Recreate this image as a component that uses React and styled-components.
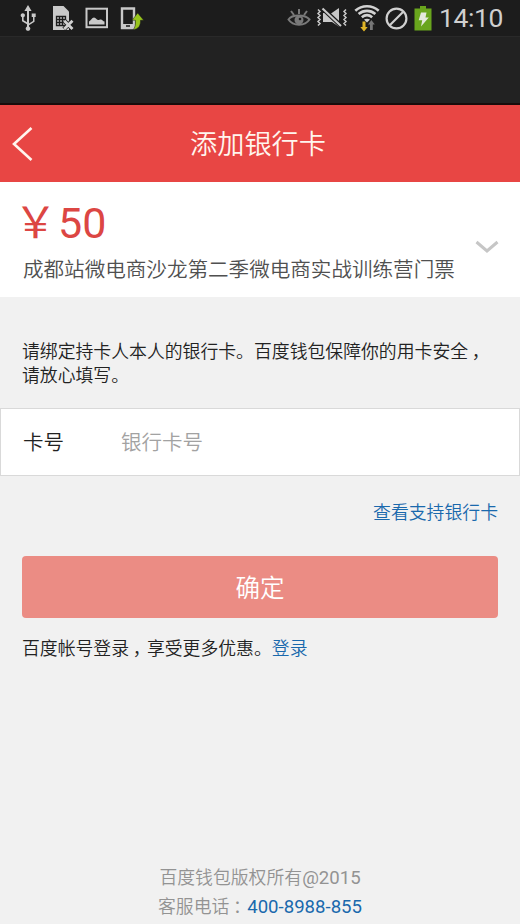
import React, { useState } from 'react';
import styled, { createGlobalStyle } from 'styled-components';

const GlobalStyle = createGlobalStyle`
  * {
    box-sizing: border-box;
  }

  body {
    margin: 0;
    background: #f1f1f1;
    font-family: Roboto, 'Noto Sans CJK SC', sans-serif;
    font-weight: 350;
  }
`;

const Screen = styled.div`
  display: flex;
  flex-direction: column;
  width: 520px;
  height: 924px;
  overflow: hidden;
  background: #f1f1f1;
`;

const StatusBar = styled.div`
  display: flex;
  align-items: center;
  justify-content: space-between;
  height: 37px;
  flex: none;
  padding: 0 17px 0 19px;
  background: #1c1c1c;
  border-bottom: 1px solid #292929;

  svg {
    display: block;
    flex: none;
  }
`;

const IconGroup = styled.div`
  display: flex;
  align-items: center;
  gap: ${props => props.$gap || '0'};

  .usb {
    margin-right: 4px;
  }
`;

const Clock = styled.span`
  width: 64px;
  margin-left: 2px;
  font-size: 26.5px;
  font-weight: 400;
  line-height: 36px;
  letter-spacing: -0.4px;
  color: #cfcfcf;
  white-space: nowrap;
`;

const TopBand = styled.div`
  height: 68px;
  flex: none;
  background: #222;
  border-bottom: 2px solid #190c0b;
`;

const Header = styled.header`
  display: grid;
  grid-template-columns: 46px 1fr 50px;
  align-items: center;
  height: 77px;
  flex: none;
  background: #e84644;
`;

const BackButton = styled.button`
  display: flex;
  padding: 0 0 0 10px;
  border: 0;
  background: none;
`;

const Title = styled.h1`
  margin: 0;
  padding-top: 3px;
  font-size: 27.2px;
  font-weight: 350;
  line-height: 40px;
  text-align: center;
  color: #fff5ee;
`;

const Order = styled.section`
  display: flex;
  align-items: center;
  justify-content: space-between;
  height: 115px;
  flex: none;
  padding: 14px 21px 0 23px;
  background: #fff;
`;

const Price = styled.div`
  display: flex;
  align-items: baseline;
  gap: 1px;
  height: 57px;
  font-size: 43px;
  font-weight: 400;
  line-height: 50px;
  color: #dc4643;
`;

// the full-width yen sign has wide side bearings
const Currency = styled.span`
  margin-left: -9px;
  font-family: 'Noto Sans CJK SC', sans-serif;
  line-height: 1;
`;

const OrderName = styled.div`
  height: 41px;
  font-size: 20.57px;
  line-height: 30px;
  color: #505050;
  white-space: nowrap;
`;

const Hint = styled.p`
  margin: 0;
  padding: 43px 20px 0 22px;
  height: 111px;
  flex: none;
  font-size: 17.85px;
  line-height: 23.5px;
  color: #222;
`;

// Full-width punctuation, trimmed to half a cell and centred in it again
const Mark = styled.span`
  font-family: 'Noto Sans CJK SC', sans-serif;
  font-feature-settings: 'halt';
  line-height: 1;
  padding: 0 0.3em 0 0.2em;
`;

const Field = styled.label`
  display: flex;
  align-items: center;
  height: 68px;
  flex: none;
  padding: 0 22px;
  border: 1px solid #d9d9d9;
  background: #fff;
  font-size: 20.5px;
  color: #222;
`;

const FieldName = styled.span`
  width: 98px;
  padding-top: 1px;
  line-height: 30px;
`;

const FieldInput = styled.input`
  flex: 1;
  min-width: 0;
  padding: 1px 0 0;
  border: 0;
  outline: 0;
  font: inherit;
  color: #222;

  &::placeholder {
    color: #a2a2a2;
    opacity: 1;
  }
`;

const Link = styled.a`
  color: #1a69ad;
  text-decoration: none;
`;

const BankLink = styled(Link)`
  align-self: flex-end;
  height: 80px;
  padding: 23px 22px 0 0;
  font-size: 17.85px;
  line-height: 28px;
`;

const Submit = styled.button`
  height: 62px;
  flex: none;
  margin: 0 22px;
  padding: 4px 0 0 0;
  border: 0;
  border-radius: 4px;
  background: #eb8c84;
  font: inherit;
  font-size: 24.5px;
  line-height: 58px;
  color: #fff;
`;

const LoginHint = styled.p`
  margin: 16px 22px 0;
  font-size: 17.85px;
  line-height: 30px;
  color: #222;
`;

const Footer = styled.footer`
  margin-top: auto;
  height: 62px;
  padding-top: 1px;
  font-size: 17.85px;
  line-height: 29px;
  text-align: center;
  color: #939393;
`;

const Latin = styled.span`
  font-size: 18.6px;
  font-weight: 400;
  line-height: 1;
`;

const UsbIcon = () => (
  <svg className="usb" width="18" height="26" viewBox="0 0 18 26" fill="#c9c9c9">
    <path d="M9 0l3.600 6H10v12.400l4-2.400v-4h-1.300V8.500h4V12h-1.200v4.800L10 20.200v1.300a2.300 2.300 0 1 1-2 0v-2.300l-5-3V12.300a2.100 2.100 0 1 1 1.600 0v3L8 17.200V6H5.400z" />
  </svg>
);

const SimIcon = () => (
  <svg width="22" height="26" viewBox="0 0 22 26">
    <path d="M1 1h10.500L17 6.500V25H1z" fill="#c9c9c9" />
    <path d="M4.500 11.500h9v9h-9zM7.500 11.500v9M10.500 11.500v9M4.500 14.500h9M4.500 17.500h9" fill="none" stroke="#1c1c1c" strokeWidth="1.300" />
    <path d="M12 15.500l8.500 8.500M20.500 15.500L12 24" stroke="#1c1c1c" strokeWidth="4.500" />
    <path d="M12.200 15.700l8.300 8.300M20.500 15.700L12.200 24" stroke="#d0d0d0" strokeWidth="2.800" />
  </svg>
);

const PictureIcon = () => (
  <svg width="24" height="22" viewBox="0 0 24 22">
    <rect x="1.500" y="1.700" width="20.500" height="18.500" fill="none" stroke="#c9c9c9" strokeWidth="2" />
    <path d="M4 17.500v-3c2-1 3-4 5-4s2.500 2.500 4 2.500 2-.8 3.200-.5 1.800 2 3.300 2v3z" fill="#c9c9c9" />
  </svg>
);

const PhoneIcon = () => (
  <svg width="24" height="25" viewBox="0 0 24 25">
    <path d="M2 2.500h12V22H2z" fill="none" stroke="#c9c9c9" strokeWidth="2.400" />
    <path d="M2 18h12v4.500H2z" fill="#c9c9c9" />
    <path d="M6 20h4" stroke="#333" strokeWidth="1.800" />
    <path d="M17.700 7l6 7.300h-3.200c.2 5-1.700 8.900-7.500 9.400 2.200-2 2.600-5 2.300-9.400H12z" fill="#98c51c" stroke="#1c1c1c" strokeWidth=".5" />
  </svg>
);

const EyeIcon = () => (
  <svg width="24" height="20" viewBox="0 0 24 20" fill="none" stroke="#797979">
    <path d="M1.500 11.500C5 6.200 18 6.200 22.500 11.500 18 18.500 6 18.500 1.500 11.500z" strokeWidth="2" />
    <path d="M12 1v5M4 3l3 4M20 3l-3 4" strokeWidth="2" />
    <circle cx="12" cy="12" r="3.500" fill="#797979" strokeWidth="2" />
    <circle cx="13" cy="11" r="1.300" fill="#1c1c1c" stroke="none" />
  </svg>
);

const MuteIcon = () => (
  <svg width="32" height="22" viewBox="0 0 32 22" fill="none" stroke="#c9c9c9">
    <path d="M2 2.500l2 2-2 2 2 2-2 2 2 2-2 2 2 2-2 2M30 2.500l-2 2 2 2-2 2 2 2-2 2 2 2-2 2 2 2" strokeWidth="1.500" />
    <path d="M7 6h3.500l13 12.500V20L16 15H7zM15 6.500L23 1v13z" fill="#c9c9c9" stroke="none" />
    <path d="M6.500 1.500L25 19" stroke="#1c1c1c" strokeWidth="4.200" />
    <path d="M6.500 1.500L25 19" strokeWidth="2.100" />
  </svg>
);

const WifiIcon = () => (
  <svg width="26" height="28" viewBox="0 0 26 28" fill="none">
    <path d="M1.300 6.700C8 .8 18 .8 24.700 6.700M4.600 10c5-4.200 11.800-4.200 16.800 0M7.800 13.200c3.200-2.600 7.200-2.600 10.400 0" stroke="#d2d2d2" strokeWidth="2.600" />
    <path d="M10 15.600c2-1.300 4-1.300 6 0L13 18.500z" fill="#d2d2d2" />
    <path d="M8.500 17.500h3v5.500h2.200l-3.700 4.500L6.300 23h2.200z" fill="#e0b526" />
    <path d="M16 26v-5.500h-2l3.400-4.500 3.400 4.500h-2V26z" fill="#777" />
  </svg>
);

const BlockIcon = () => (
  <svg width="23" height="23" viewBox="0 0 23 23" fill="none" stroke="#d0d0d0" strokeWidth="2.200">
    <circle cx="11.500" cy="11.500" r="9.900" />
    <path d="M5 18L18 5" />
  </svg>
);

const BatteryIcon = () => (
  <svg width="18" height="26" viewBox="0 0 18 26">
    <path d="M6 1h6v2.500h5.500V25.500H.5V3.500H6z" fill="#69a51d" />
    <path d="M7 7.500h5.500l-1 5h3.300L7 21.500l1.200-6.300H4.700z" fill="#e4e9dd" />
  </svg>
);

function App() {
  const [cardNumber, setCardNumber] = useState('');

  return (
    <>
      <GlobalStyle />
      <Screen>
        <StatusBar>
          <IconGroup $gap="11px">
            <UsbIcon />
            <SimIcon />
            <PictureIcon />
            <PhoneIcon />
          </IconGroup>
          <IconGroup $gap="5.400px">
            <EyeIcon />
            <MuteIcon />
            <WifiIcon />
            <BlockIcon />
            <BatteryIcon />
            <Clock>14:10</Clock>
          </IconGroup>
        </StatusBar>
        <TopBand />

        <Header>
          <BackButton aria-label="返回">
            <svg width="24" height="36" viewBox="0 0 24 36" fill="none" stroke="#fff5ee" strokeWidth="2.600">
              <path d="M21.500 2L4 18l17.500 16" />
            </svg>
          </BackButton>
          <Title>添加银行卡</Title>
        </Header>

        <Order>
          <div>
            <Price>
              <Currency>￥</Currency>
              <span>50</span>
            </Price>
            <OrderName>成都站微电商沙龙第二季微电商实战训练营门票</OrderName>
          </div>
          <svg width="24" height="14" viewBox="0 0 24 14" fill="none" stroke="#c6c6c6" strokeWidth="3">
            <path d="M1.500 2L12 11 22.500 2" />
          </svg>
        </Order>

        <Hint>
          请绑定持卡人本人的银行卡。百度钱包保障你的用卡安全<Mark>，</Mark>
          <br />
          请放心填写。
        </Hint>

        <Field>
          <FieldName>卡号</FieldName>
          <FieldInput
            placeholder="银行卡号"
            value={cardNumber}
            onChange={e => setCardNumber(e.target.value)}
          />
        </Field>
        <BankLink>查看支持银行卡</BankLink>

        <Submit>确定</Submit>
        <LoginHint>
          百度帐号登录<Mark>，</Mark>享受更多优惠。<Link>登录</Link>
        </LoginHint>

        <Footer>
          <div>百度钱包版权所有<Latin>@2015</Latin></div>
          <div>客服电话<Mark>：</Mark><Latin as={Link}>400-8988-855</Latin></div>
        </Footer>
      </Screen>
    </>
  );
}

export default App;
